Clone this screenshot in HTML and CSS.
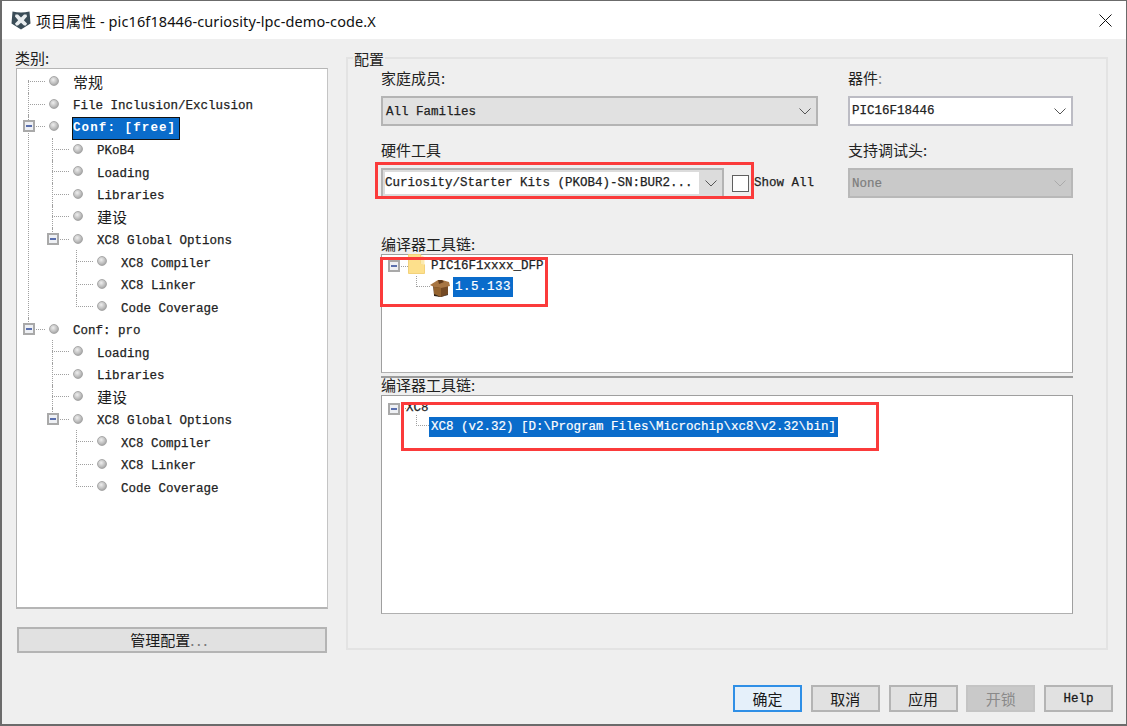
FILE: index.html
```html
<!DOCTYPE html>
<html lang="zh">
<head>
<meta charset="utf-8">
<title>项目属性</title>
<link rel="stylesheet" href="styles.css">
</head>
<body>
<div class="window">
  <header class="titlebar">
    <svg class="appicon" viewBox="0 0 20 20"><path d="M1.500 1.500Q10 3.500 18.500 1.500L19.500 13.500 10 19.500.5 13.500z" fill="#3a4c57"/><path d="M4.500 4.500h2.500L10 7.500 13 4.500h2.500L16 6.500 12.800 10.200 16 13.500 15 15.500h-2L10 12.800 7 15.500H5L4 13.500 7.200 10.200 4 6.500z" fill="#e9edef"/></svg>
    <span class="title"><span class="titlecjk">项目属性</span> - pic16f18446-curiosity-lpc-demo-code.X</span>
    <svg class="close" viewBox="0 0 13 13"><path d="M.5.500l12 12M12.500.500l-12 12" stroke="#111" stroke-width="1" fill="none"/></svg>
  </header>

  <main class="content">
    <section class="left">
      <div class="label cat">类别:</div>
      <div class="cattree">
        <ul class="rootlist">
          <li><div class="row"><i class="dash"></i><b class="dot"></b><span class="cjk">常规</span></div></li>
          <li><div class="row"><i class="dash"></i><b class="dot"></b><span class="mono">File Inclusion/Exclusion</span></div></li>
          <li>
            <div class="row"><i class="tog"></i><i class="dash"></i><b class="dot"></b><span class="mono sel">Conf: [free]</span></div>
            <ul class="sub">
              <li><div class="row"><i class="dash"></i><b class="dot"></b><span class="mono">PKoB4</span></div></li>
              <li><div class="row"><i class="dash"></i><b class="dot"></b><span class="mono">Loading</span></div></li>
              <li><div class="row"><i class="dash"></i><b class="dot"></b><span class="mono">Libraries</span></div></li>
              <li><div class="row"><i class="dash"></i><b class="dot"></b><span class="cjk">建设</span></div></li>
              <li>
                <div class="row"><i class="tog"></i><i class="dash"></i><b class="dot"></b><span class="mono">XC8 Global Options</span></div>
                <ul class="sub">
                  <li><div class="row"><i class="dash"></i><b class="dot"></b><span class="mono">XC8 Compiler</span></div></li>
                  <li><div class="row"><i class="dash"></i><b class="dot"></b><span class="mono">XC8 Linker</span></div></li>
                  <li><div class="row"><i class="dash"></i><b class="dot"></b><span class="mono">Code Coverage</span></div></li>
                </ul>
              </li>
            </ul>
          </li>
          <li>
            <div class="row"><i class="tog"></i><i class="dash"></i><b class="dot"></b><span class="mono">Conf: pro</span></div>
            <ul class="sub">
              <li><div class="row"><i class="dash"></i><b class="dot"></b><span class="mono">Loading</span></div></li>
              <li><div class="row"><i class="dash"></i><b class="dot"></b><span class="mono">Libraries</span></div></li>
              <li><div class="row"><i class="dash"></i><b class="dot"></b><span class="cjk">建设</span></div></li>
              <li>
                <div class="row"><i class="tog"></i><i class="dash"></i><b class="dot"></b><span class="mono">XC8 Global Options</span></div>
                <ul class="sub">
                  <li><div class="row"><i class="dash"></i><b class="dot"></b><span class="mono">XC8 Compiler</span></div></li>
                  <li><div class="row"><i class="dash"></i><b class="dot"></b><span class="mono">XC8 Linker</span></div></li>
                  <li><div class="row"><i class="dash"></i><b class="dot"></b><span class="mono">Code Coverage</span></div></li>
                </ul>
              </li>
            </ul>
          </li>
        </ul>
      </div>
      <button class="btn manage">管理配置<span class="dots">...</span></button>
    </section>

    <section class="config">
      <div class="legend">配置</div>
      <div class="formgrid">
        <div class="field">
          <div class="label">家庭成员:</div>
          <div class="select gray"><span class="mono">All Families</span><svg class="chev" viewBox="0 0 12 7"><path d="M.5.500 6 6 11.500.500" fill="none" stroke="#555"/></svg></div>
        </div>
        <div class="field">
          <div class="label">器件<span class="thin">:</span></div>
          <div class="select white"><span class="mono">PIC16F18446</span><svg class="chev" viewBox="0 0 12 7"><path d="M.5.500 6 6 11.500.500" fill="none" stroke="#555"/></svg></div>
        </div>
        <div class="field">
          <div class="label">硬件工具</div>
          <div class="hwrow">
            <div class="select hw"><span class="mono hwtext">Curiosity/Starter Kits (PKOB4)-SN:BUR2...</span><svg class="chev" viewBox="0 0 12 7"><path d="M.5.500 6 6 11.500.500" fill="none" stroke="#555"/></svg></div>
            <span class="check"></span>
            <span class="mono">Show All</span>
            <div class="hl hl1"></div>
          </div>
        </div>
        <div class="field">
          <div class="label">支持调试头:</div>
          <div class="select off"><span class="mono">None</span><svg class="chev" viewBox="0 0 12 7"><path d="M.5.500 6 6 11.500.500" fill="none" stroke="#aaa"/></svg></div>
        </div>
      </div>

      <div class="label chain">编译器工具链:</div>
      <div class="pane pane1">
        <div class="prow"><i class="tog"></i><i class="dash"></i>
          <svg class="folder" viewBox="0 0 17 20"><path d="M.5.500h12l.5 9 3.500 1v9H.5z" fill="#fde08c" stroke="#f3d27a"/><path d="M13 1v9l3.500 1V3z" fill="#fbeab0"/></svg>
          <span class="mono">PIC16F1xxxx_DFP</span></div>
        <div class="prow child"><i class="elbow"></i>
          <svg class="pkg" viewBox="0 0 20 18"><path d="M3 7h15v8l-7 3-7-2z" fill="#5f3a1b"/><path d="M11 7l7-1v9l-7 3z" fill="#754a24"/><path d="M0 6 8 1l4 0 7 2 1 4-9 2-7-1z" fill="#a87643"/><path d="M8 1l4 0 2 2-5 2z" fill="#5f3a1b"/><path d="M4 8l7 1v9l-7-2z" fill="#94632f"/><path d="M4 15l7 3 7-3v1l-7 2-7-1z" fill="#2e2015"/></svg>
          <span class="mono selblue wide">1.5.133</span></div>
        <div class="hl hl2"></div>
      </div>
      <div class="splitter"></div>
      <div class="label chain2">编译器工具链:</div>
      <div class="pane pane2">
        <div class="prow two"><i class="tog"></i><i class="dash short"></i><span class="mono xc">XC8</span></div>
        <div class="prow child two"><i class="elbow"></i><span class="mono selblue">XC8 (v2.32) [D:\Program Files\Microchip\xc8\v2.32\bin]</span></div>
        <div class="hl hl3"></div>
      </div>
    </section>
  </main>

  <footer class="actions">
    <button class="btn def">确定</button>
    <button class="btn">取消</button>
    <button class="btn">应用</button>
    <button class="btn dis">开锁</button>
    <button class="btn help">Help</button>
  </footer>
</div>
</body>
</html>
```

FILE: styles.css
```css
* { box-sizing: border-box; }
html, body { margin: 0; padding: 0; background: #f0f0f0; }
body { font-family: "Noto Sans CJK SC", "Noto Sans", sans-serif; color: #1a1a1a; }
ul { list-style: none; margin: 0; padding: 0; }
i, b { display: block; font-style: normal; }

.window {
  width: 1127px; height: 726px; display: flex; flex-direction: column;
  border: 1px solid #6b6b6b; border-width: 1px 1px 2px 2px; background: #efefef; overflow: hidden;
}
.titlebar {
  height: 38px; flex: none; background: #fff; display: flex; align-items: center; padding: 0 15px 0 9px;
}
.appicon { width: 20px; height: 20px; flex: none; }
.title { margin-left: 5px; font-family: "Noto Sans", "Noto Sans CJK SC", sans-serif; font-size: 14.5px; letter-spacing: .11px; color: #111; flex: 1; white-space: nowrap; }
.titlecjk { font-size: 15px; letter-spacing: 0; }
.close { width: 13px; height: 13px; flex: none; margin-right: -1px; }

.content { display: flex; flex: none; height: 611px; }
.left { width: 344px; flex: none; padding: 10px 0 0 13px; display: flex; flex-direction: column; }
.label { font-size: 15px; line-height: 18px; height: 18px; color: #222; white-space: nowrap; }
.cat { margin-bottom: 1px; flex: none; }
.thin { color: #888; }

.cattree { flex: none; width: 312px; height: 541px; margin-left: 1px; background: #fff; border: 1px solid #b5b5b5; border-right-color: #c4c4c4; border-bottom-width: 2px; padding: 3px 0 0 11px; }
.rootlist li { position: relative; }
.rootlist li::before { content: ""; position: absolute; left: 0; top: -2px; bottom: 0; border-left: 1px dotted #a0a0a0; }
.rootlist > li:first-child::before { top: 8px; }
.rootlist li:last-child::before { bottom: auto; height: 12px; }
.sub { position: relative; margin-left: 24px; }
.row { position: relative; height: 22.5px; display: flex; align-items: center; white-space: nowrap; }
.dash { width: 17px; height: 0; border-top: 1px dotted #a0a0a0; flex: none; margin-top: -3px; }
.dot {
  width: 10px; height: 10px; border-radius: 50%; flex: none; margin-left: 4px; margin-top: -4px;
  background: radial-gradient(circle at 40% 35%, #eee 0, #bdbdbd 55%, #8e8e8e 100%);
  border: 1px solid #a8a8a8;
}
.row > span { margin-left: 14px; }
.row > .mono { margin-top: 1px; }
.mono { font-family: "Liberation Mono", "DejaVu Sans Mono", monospace; font-size: 12.5px; font-weight: 400; color: #222; -webkit-text-stroke: .25px #222; white-space: pre; }
.cjk { font-size: 15px; color: #1a1a1a; margin-top: -3px; }
.row > .sel { background: #0a6ccb; color: #fff; font-weight: 700; letter-spacing: 1.1px; -webkit-text-stroke: 0; outline: 1px solid #111; padding: 2px 0; line-height: 17px; width: 106px; margin-left: 14px; margin-top: 0; }
.tog {
  position: absolute; left: -5px; top: 3px; width: 12px; height: 12px; background: #eef0f4; border: 2px solid #a9a9a9; z-index: 2;
}
.tog::after { content: ""; position: absolute; left: 1px; right: 1px; top: 3px; height: 2px; background: #5a6fae; }

.btn {
  font-family: "Noto Sans CJK SC", sans-serif; font-size: 15px; color: #1a1a1a; background: #e1e1e1; border: 2px solid #b4b4b4; padding: 0; height: 26px; line-height: 20px;
}
.manage { flex: none; width: 310px; margin: 18px 0 0 2px; padding-right: 4px; }
.dots { color: #777; letter-spacing: 2.4px; }

.config { position: relative; width: 762px; height: 593px; margin: 18px 0 0 0; border: 2px solid #e3e3e3; padding: 10px 0 0 33px; }
.legend { position: absolute; left: 5px; top: -9px; font-size: 15px; line-height: 17px; background: #efefef; padding: 0 1px; color: #222; }
.formgrid { display: grid; grid-template-columns: 437px 225px; column-gap: 30px; row-gap: 15px; }
.field .label { margin-bottom: 9px; }
.select { position: relative; height: 30px; display: flex; align-items: center; border: 2px solid #b4b4b4; padding-left: 3px; }
.select.gray { background: #e1e1e1; }
.select.gray .mono { margin-top: 2px; }
.select.white { background: #fff; border-color: #bcbcc4; padding-left: 2px; }
.select.off { background: #c9c9c9; border-color: #b8b8b8; padding-left: 2px; }
.select.off .mono { color: #7d7d7d; -webkit-text-stroke: .2px #7d7d7d; margin-top: 1px; }
.chev { position: absolute; right: 3px; top: 10px; width: 12px; height: 7px; margin-right: 2px; }
.hwrow { position: relative; display: flex; align-items: center; }
.select.hw { width: 343px; background: #dcdcdc; padding: 2px 0 2px 2px; }
.hwtext { background: #fff; width: 314px; height: 22px; line-height: 23px; overflow: hidden; display: block; }
.check { width: 17px; height: 17px; margin: 0 5px 0 8px; background: #fff; border: 1px solid #5f5f5f; flex: none; }

.hl { position: absolute; border: 3px solid #fb3b3b; pointer-events: none; z-index: 5; }
.hl1 { left: -6px; top: -6px; width: 379px; height: 37px; }
.hl2 { left: -2px; top: 2px; width: 168px; height: 50px; }
.hl3 { left: 19px; top: 6px; width: 478px; height: 49px; }

.chain { margin-top: 37px; margin-bottom: 1px; }
.pane { position: relative; width: 692px; background: #fff; border: 1px solid #9f9f9f; border-bottom-color: #b0b0b0; }
.pane1 { height: 119px; padding-top: 0; }
.splitter { height: 5px; width: 692px; border-bottom: 2px solid #9d9d9d; margin-top: 0; }
.chain2 { margin-top: -2px; margin-bottom: 1px; }
.pane2 { height: 219px; padding-top: 1px; }
.prow { position: relative; height: 22px; display: flex; align-items: center; padding-left: 11px; white-space: nowrap; }
.prow .tog { left: 6px; top: 5px; }
.prow .dash { margin-top: 0; width: 9px; margin-left: 6px; }
.prow .dash.short { width: 7px; }
.folder { width: 17px; height: 20px; flex: none; margin: -1px 6px 0 0; align-self: flex-start; }
.pkg { width: 20px; height: 18px; flex: none; margin-top: 1px; }
.prow.child { padding-left: 34px; margin-top: -1px; }
.elbow { width: 14px; height: 11px; border-left: 1px dotted #a0a0a0; border-bottom: 1px dotted #a0a0a0; margin-top: -12px; flex: none; }
.pkg + .selblue { margin-left: 3px; }
.selblue { background: #0a6ccb; color: #fff; -webkit-text-stroke: .2px #fff; padding: 1px 2px; line-height: 18px; }
.selblue.wide { letter-spacing: .5px; }
.prow.two { height: 20px; }
.pane2 .prow.two:first-child { margin-top: 1px; }
.pane2 .xc { margin-left: 0; }
.pane2 .prow.child { margin-top: -2px; height: 21px; }
.pane2 .elbow { width: 13px; }

.actions { display: flex; justify-content: flex-end; gap: 8.75px; padding: 35px 13px 0 0; flex: none; }
.actions .btn { width: 69px; height: 27px; }
.def { background: #e5f0fa; border-color: #2f8fe6; }
.dis { background: #c9c9c9; border-color: #c4c4c4; color: #8a8a8a; }
.help { font-family: "Liberation Mono", monospace; font-size: 12.5px; -webkit-text-stroke: .3px #1a1a1a; }
```
